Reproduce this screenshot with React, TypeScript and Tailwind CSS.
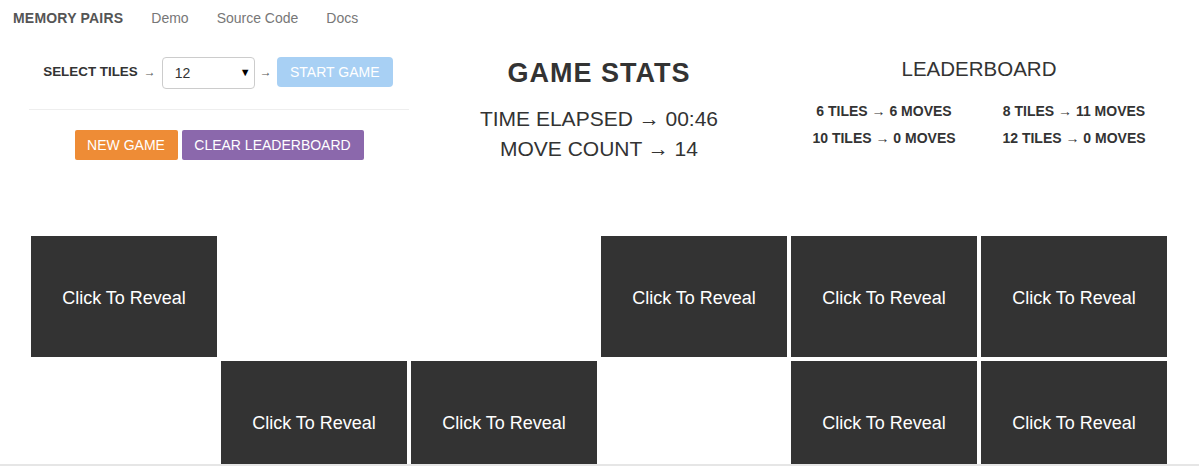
import React from 'react'

const font = { fontFamily: '"Liberation Sans", Arial, sans-serif' }

// 12 tiles, null = already matched (hidden)
const tiles: (string | null)[] = [
  'Click To Reveal', null, null, 'Click To Reveal', 'Click To Reveal', 'Click To Reveal',
  null, 'Click To Reveal', 'Click To Reveal', null, 'Click To Reveal', 'Click To Reveal',
]

const leaderboard = [
  '6 TILES → 6 MOVES',
  '8 TILES → 11 MOVES',
  '10 TILES → 0 MOVES',
  '12 TILES → 0 MOVES',
]

function Navbar() {
  return (
    <nav className="h-[36px] flex items-center pl-[13px] gap-[28px] text-[14px]">
      <span className="font-bold text-[#555] tracking-[0.2px]">MEMORY PAIRS</span>
      <a className="text-[#777]">Demo</a>
      <a className="text-[#777]">Source Code</a>
      <a className="text-[#777]">Docs</a>
    </nav>
  )
}

function Controls() {
  return (
    <div className="w-[380px] pt-[21px]">
      <div className="flex items-start justify-center pr-[2px]">
        <span className="text-[13.4px] font-bold text-[#333] leading-[30px]">SELECT TILES</span>
        <span className="text-[12px] text-[#555] leading-[30px] mx-[6px]">→</span>
        <div className="relative w-[93px] h-[32px]">
          <select
            defaultValue="12"
            className="appearance-none w-full h-full border border-[#ccc] rounded-[4px] pl-[12px] text-[14px] text-[#333] bg-white"
            style={font}
          >
            <option>6</option>
            <option>8</option>
            <option>10</option>
            <option>12</option>
          </select>
          <span className="absolute right-[4px] top-[7px] text-[11px] text-black pointer-events-none">▼</span>
        </div>
        <span className="text-[12px] text-[#555] leading-[30px] mx-[5px]">→</span>
        <button className="h-[30px] w-[116px] rounded-[4px] bg-[#a8d0f4] text-white text-[14px]">START GAME</button>
      </div>
      <div className="mt-[20px] border-t border-[#eee]" />
      <div className="mt-[20px] flex justify-center gap-[4px]">
        <button className="h-[30px] w-[103px] rounded-[2px] bg-[#ee8c36] text-white text-[14px]">NEW GAME</button>
        <button className="h-[30px] w-[182px] rounded-[2px] bg-[#8b68ac] text-white text-[14px]">CLEAR LEADERBOARD</button>
      </div>
    </div>
  )
}

function Stats() {
  return (
    <div className="w-[380px] pt-[22px] text-center text-[#333]">
      <h2 className="text-[27px] font-bold leading-[30px] tracking-[1px]">GAME STATS</h2>
      <div className="mt-[16px] text-[21px] leading-[30px]">
        <div>TIME ELAPSED → 00:46</div>
        <div>MOVE COUNT → 14</div>
      </div>
    </div>
  )
}

function Leaderboard() {
  return (
    <div className="w-[380px] pt-[19px] text-center text-[#333]">
      <h3 className="text-[20.5px] leading-[28px]">LEADERBOARD</h3>
      <div className="mt-[15px] grid grid-cols-2 text-[14px] font-bold leading-[27px]">
        {leaderboard.map((row) => (
          <div key={row}>{row}</div>
        ))}
      </div>
    </div>
  )
}

export default function App() {
  return (
    <div className="h-[466px] overflow-hidden bg-white" style={font}>
      <Navbar />
      <div className="w-[1140px] ml-[29px]">
        <div className="flex h-[198px]">
          <Controls />
          <Stats />
          <Leaderboard />
        </div>
        <div className="grid grid-cols-6">
          {tiles.map((t, i) => (
            <div key={i} className="p-[2px]">
              {t ? (
                <div className="h-[121px] pt-[4px] bg-[#333] text-white text-[18px] flex items-center justify-center">
                  {t}
                </div>
              ) : (
                <div className="h-[121px]" />
              )}
            </div>
          ))}
        </div>
      </div>
      <div className="fixed bottom-0 left-0 right-0 h-[2px] bg-[#e6e6e6]" />
    </div>
  )
}
